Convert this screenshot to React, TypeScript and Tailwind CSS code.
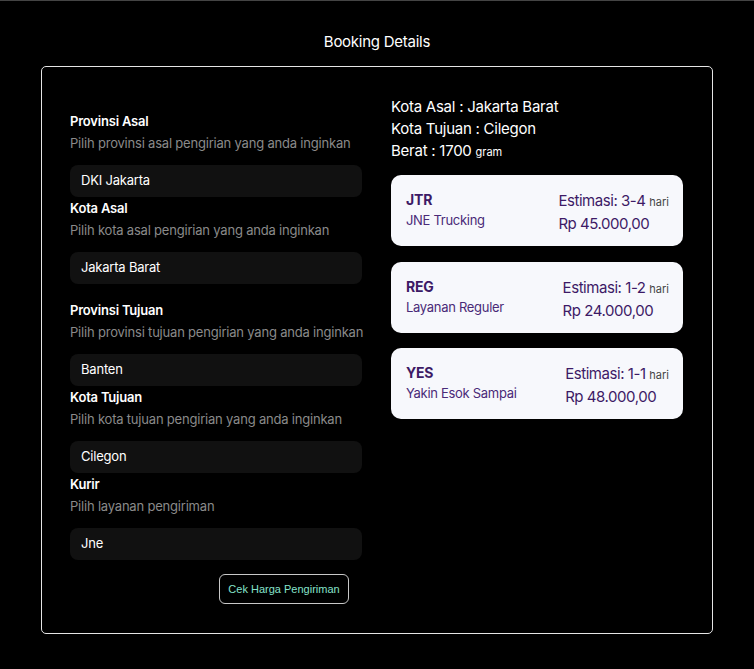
import React from "react"

const fields = [
  { label: "Provinsi Asal", hint: "Pilih provinsi asal pengirian yang anda inginkan", value: "DKI Jakarta", gap: false },
  { label: "Kota Asal", hint: "Pilih kota asal pengirian yang anda inginkan", value: "Jakarta Barat", gap: false },
  { label: "Provinsi Tujuan", hint: "Pilih provinsi tujuan pengirian yang anda inginkan", value: "Banten", gap: true },
  { label: "Kota Tujuan", hint: "Pilih kota tujuan pengirian yang anda inginkan", value: "Cilegon", gap: false },
  { label: "Kurir", hint: "Pilih layanan pengiriman", value: "Jne", gap: false },
]

const services = [
  { code: "JTR", name: "JNE Trucking", etd: "3-4", price: "Rp 45.000,00" },
  { code: "REG", name: "Layanan Reguler", etd: "1-2", price: "Rp 24.000,00" },
  { code: "YES", name: "Yakin Esok Sampai", etd: "1-1", price: "Rp 48.000,00" },
]

export default function App() {
  return (
    <div
      className="min-h-[669px] w-full bg-black border-t border-[#444] text-white"
      style={{ fontFamily: "Inter, Roboto, sans-serif" }}
    >
      <h1 className="pt-[30px] text-center text-[15px] leading-[22px] tracking-[-0.25px]">Booking Details</h1>

      <div className="mx-[41px] mt-[13px] h-[568px] w-[672px] rounded-[5px] border border-[#e5e5e5] px-[28px] pt-[29px]">
        <div className="flex gap-[29px]">
          {/* Form */}
          <div className="w-[292px] pt-[14px] tracking-[-0.2px]">
            {fields.map((f) => (
              <div key={f.label} className={f.gap ? "mt-[15px]" : ""}>
                <div className="text-[13px] font-semibold leading-[22px]">{f.label}</div>
                <div className="whitespace-nowrap text-[13px] leading-[22px] text-[#8a8a8a]">{f.hint}</div>
                <div className="mt-[11px] flex h-[32px] items-center rounded-[8px] bg-[#111111] px-[11px] text-[13px]">
                  {f.value}
                </div>
              </div>
            ))}
            <div className="mt-[14px] pl-[149px]">
              <button
                className="h-[30px] w-[130px] rounded-[6px] border border-[#c8c8c8] text-[11px] tracking-normal text-[#86e3cb]"
                style={{ fontFamily: "'Liberation Sans', Arial, sans-serif" }}
              >
                Cek Harga Pengiriman
              </button>
            </div>
          </div>

          {/* Result */}
          <div className="w-[292px]">
            <div className="text-[15px] leading-[22px] tracking-[-0.25px]">
              <p>Kota Asal : Jakarta Barat</p>
              <p>Kota Tujuan : Cilegon</p>
              <p>
                Berat : 1700 <span className="text-[11px] tracking-normal">gram</span>
              </p>
            </div>
            <div className="mt-[12px] flex flex-col gap-[15.5px]">
              {services.map((s) => (
                <div
                  key={s.code}
                  className="flex h-[71px] items-start justify-between rounded-[10px] bg-[#f7f8fc] pl-[15px] pr-[14px] pt-[15px] text-[#3d1a66]"
                >
                  <div>
                    <div className="text-[14px] font-bold leading-[20px] tracking-[-0.2px]">{s.code}</div>
                    <div className="text-[13px] leading-[20px] tracking-[-0.3px] text-[#4a2a78]">{s.name}</div>
                  </div>
                  <div className="tracking-[-0.45px]">
                    <div className="text-[15px] leading-[22px]">
                      Estimasi: {s.etd}{" "}
                      <span className="text-[11px] tracking-normal text-[#444]">hari</span>
                    </div>
                    <div className="text-[15px] leading-[22px]">{s.price}</div>
                  </div>
                </div>
              ))}
            </div>
          </div>
        </div>
      </div>
    </div>
  )
}
